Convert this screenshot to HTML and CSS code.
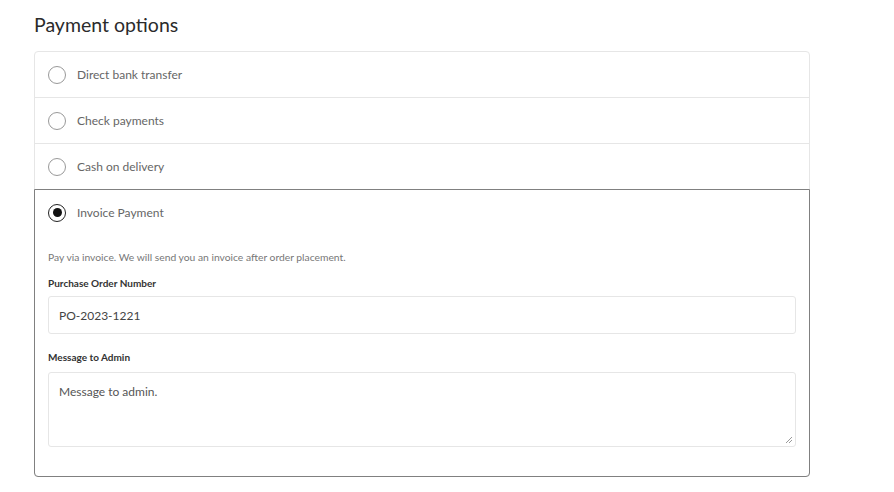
FILE: index.html
```html
<!DOCTYPE html>
<html>
<head>
<meta charset="utf-8">
<link rel="stylesheet" href="styles.css">
</head>
<body>
<div class="page">
  <h2 class="title">Payment options</h2>
  <div class="options">
    <div class="option">
      <span class="radio"></span><span class="label">Direct bank transfer</span>
    </div>
    <div class="option">
      <span class="radio"></span><span class="label">Check payments</span>
    </div>
    <div class="option">
      <span class="radio"></span><span class="label">Cash on delivery</span>
    </div>
    <div class="option selected">
      <div class="option-head">
        <span class="radio checked"></span><span class="label">Invoice Payment</span>
      </div>
      <div class="details">
        <p class="desc">Pay via invoice. We will send you an invoice after order placement.</p>
        <div class="field first">
          <div class="field-label">Purchase Order Number</div>
          <div class="input">PO-2023-1221</div>
        </div>
        <div class="field second">
          <div class="field-label">Message to Admin</div>
          <div class="textarea">Message to admin.
            <svg class="grip" width="8" height="8" viewBox="0 0 8 8"><path d="M7 1L1 7M7 4L4 7" stroke="#999" stroke-width="1"/></svg>
          </div>
        </div>
      </div>
    </div>
  </div>
</div>
</body>
</html>
```
FILE: styles.css
```css
* { box-sizing: border-box; }
body {
  margin: 0;
  background: #fff;
  font-family: "Lato", "Noto Sans", sans-serif;
  color: #333;
}
.page {
  padding: 12px 0 0 34px;
  width: 810px;
}
.title {
  margin: 0 0 13px 0;
  font-size: 19.5px;
  font-weight: 400;
  color: #2b2b2b;
  line-height: 26px;
}
.options {
  border: 1px solid #e6e6e6;
  border-radius: 4px;
}
.option {
  display: flex;
  align-items: center;
  height: 46px;
  padding-left: 13px;
  border-bottom: 1px solid #e6e6e6;
}
.option-head {
  display: flex;
  align-items: center;
  height: 45px;
}
.radio {
  width: 18px;
  height: 18px;
  border: 1.5px solid #999;
  border-radius: 50%;
  flex: none;
  display: flex;
  align-items: center;
  justify-content: center;
}
.radio.checked {
  border: 1.5px solid #222;
}
.radio.checked::after {
  content: "";
  width: 9px;
  height: 9px;
  border-radius: 50%;
  background: #111;
}
.label {
  margin-left: 11px;
  font-size: 12px;
  color: #666;
}
.option.selected {
  display: block;
  height: auto;
  margin: -1px;
  border: 1px solid #808080;
  border-radius: 0 0 4px 4px;
  padding: 0 13px 29px 13px;
}
.details {
  padding-top: 15px;
}
.desc {
  margin: 0;
  font-size: 10.3px;
  color: #777;
  line-height: 14px;
}
.field-label {
  font-size: 10px;
  font-weight: 700;
  color: #333;
  line-height: 14px;
}
.field.first .field-label { margin-top: 12px; margin-bottom: 6px; }
.field.second .field-label { margin-top: 16px; margin-bottom: 8px; }
.input {
  height: 38px;
  border: 1px solid #e6e6e6;
  border-radius: 3px;
  padding: 0 10px;
  display: flex;
  align-items: center;
  font-size: 12px;
  color: #444;
}
.textarea {
  position: relative;
  height: 75px;
  border: 1px solid #e6e6e6;
  border-radius: 3px;
  padding: 11px 10px;
  font-size: 12px;
  color: #555;
}
.grip {
  position: absolute;
  right: 2px;
  bottom: 2px;
}
```
